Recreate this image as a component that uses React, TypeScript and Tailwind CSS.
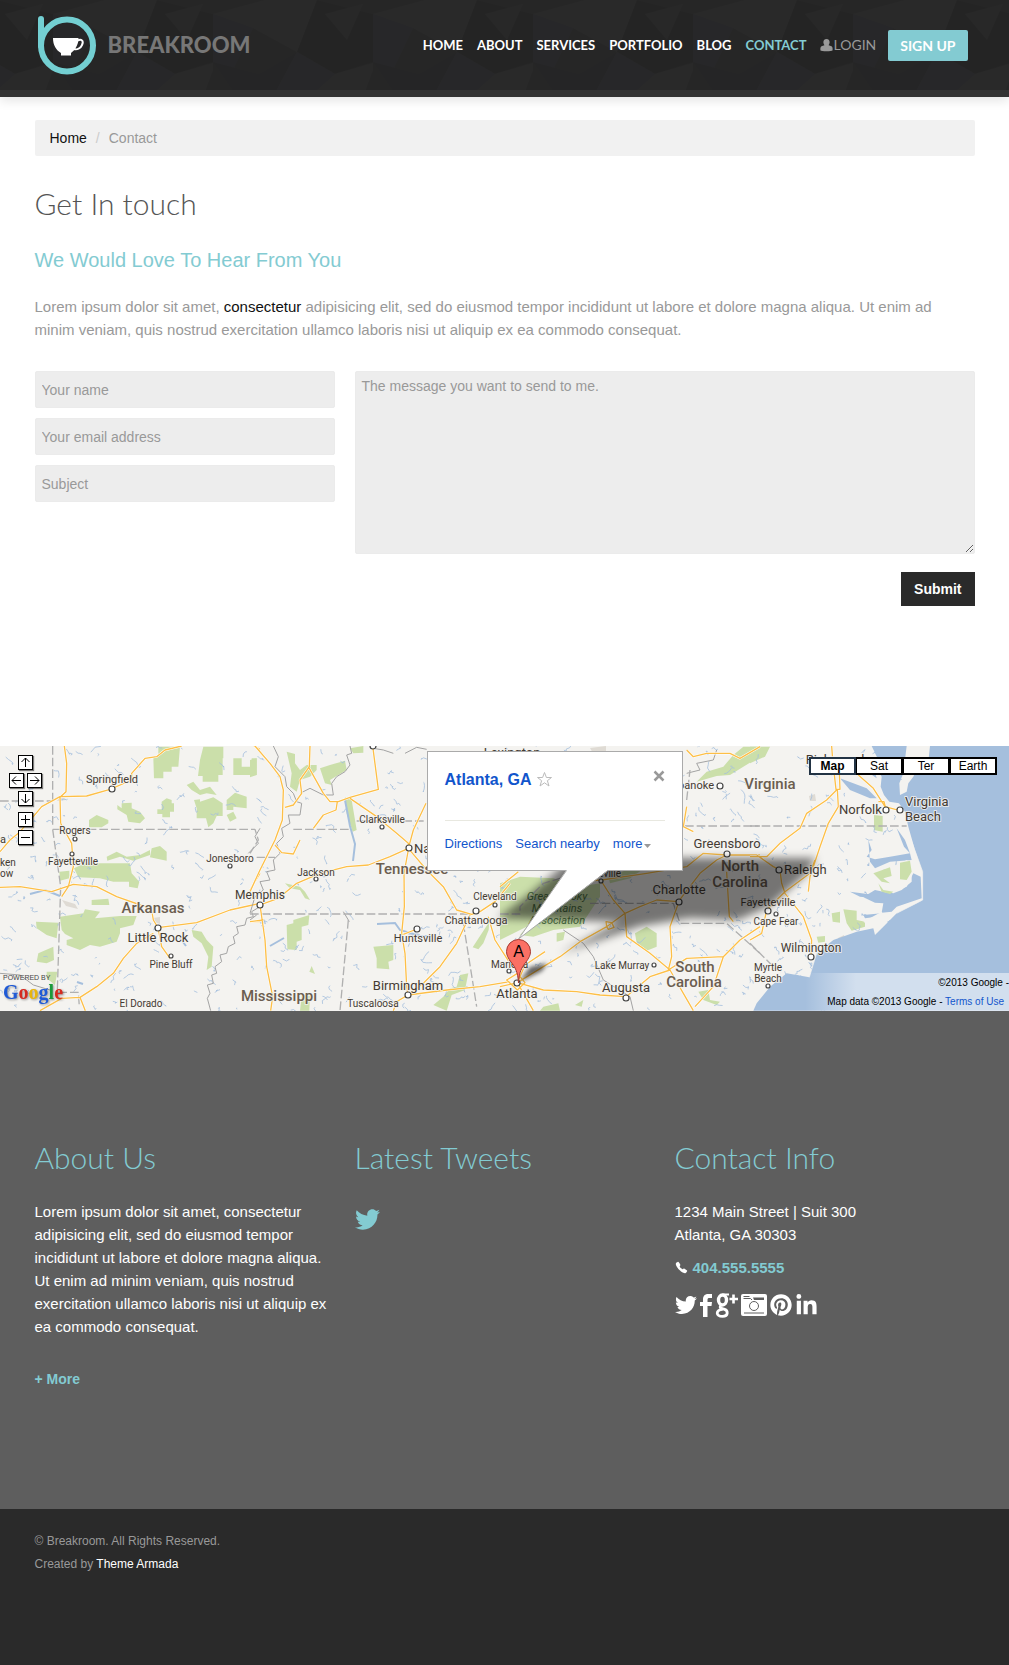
import React from 'react';
import { FaTwitter, FaPinterest, FaLinkedinIn } from 'react-icons/fa';
import { IoCall } from 'react-icons/io5';

const navItems = ['Home', 'About', 'Services', 'Portfolio', 'Blog', 'Contact'];

function HeaderTexture() {
  return (
    <svg className="absolute inset-0 h-full w-full" aria-hidden="true">
      <defs>
        <pattern id="facets" width="160" height="97" patternUnits="userSpaceOnUse" x="53">
          <rect width="160" height="97" fill="#262626" />
          <path d="M0 14L52 0H104L84 52L40 28Z" fill="#292929" />
          <path d="M104 0L84 52L122 74L160 62V14Z" fill="#242424" />
          <path d="M0 14L40 28L20 70L0 62Z" fill="#272729" />
          <path d="M122 74L163 62L150 97H96Z" fill="#292929" />
          <path d="M0 62L24 97H60L84 52L46 74Z" fill="#252526" />
          <path d="M84 52L122 74L96 97H60Z" fill="#272729" />
          <path d="M112 14L150 4L134 40Z" fill="#282828" />
        </pattern>
      </defs>
      <rect width="100%" height="100%" fill="url(#facets)" />
    </svg>
  );
}

function Logo() {
  return (
    <a href="#" className="flex items-center gap-3" aria-label="Breakroom home">
      <svg width="61" height="60" viewBox="0 0 61 60" fill="none" aria-hidden="true">
        <circle cx="32" cy="30.500" r="26" stroke="#73cfd2" strokeWidth="6" />
        <path d="M6 4V31" stroke="#73cfd2" strokeWidth="6" strokeLinecap="round" />
        <path d="M18 23H43.500C43.500 30 40 35 36 38V40.500H26V38C21 35 18 30 18 23Z" fill="#fff" />
        <path d="M42 26C46.500 23 49 26 47 30C45.500 33.500 42 35 39 34" stroke="#fff" strokeWidth="2" />
      </svg>
      <span className="font-[Lato] text-[22px] font-black leading-none text-[#777]">BREAKROOM</span>
    </a>
  );
}

function Header() {
  return (
    <header className="relative border-b-[7px] border-[#333] bg-[#262626] shadow-[0_4px_10px_rgba(0,0,0,0.1)]">
      <HeaderTexture />
      <div className="relative mx-auto flex h-[90px] w-full max-w-[940px] items-center justify-between">
        <Logo />
        <nav className="mr-[7px] flex items-center font-[Lato] text-sm font-bold uppercase">
          <ul className="flex items-center gap-3.5 text-[13px]">
            {navItems.map((item) => (
              <li key={item}>
                <a href="#" className={item === 'Contact' ? 'text-[#83cbd2]' : 'text-white'}>
                  {item}
                </a>
              </li>
            ))}
            <li>
              <a href="#" className="flex items-center text-sm font-normal text-[#999]">
                <svg width="13" height="13" viewBox="0 0 13 13" fill="currentColor" aria-hidden="true">
                  <path d="M6.500 0C8.700 0 9.800 1.600 9.600 3.600C9.500 4.900 9 5.600 8.600 6.200L11.500 7.300C12.700 7.800 12.800 10 12.500 11.500C12.300 12.600 .7 12.600 .5 11.500C.2 10 .3 7.800 1.500 7.300L4.400 6.200C4 5.600 3.500 4.900 3.400 3.600C3.200 1.600 4.300 0 6.500 0Z" />
                </svg>
                Login
              </a>
            </li>
          </ul>
          <a href="#" className="ml-3 rounded-xs bg-[#83cbd2] px-3 py-[5px] leading-[21px] text-white">
            Sign up
          </a>
        </nav>
      </div>
    </header>
  );
}

const fieldStyle =
  'w-full rounded-xs border border-[#ebebeb] bg-[#ededed] px-1.5 text-sm text-[#555] placeholder-[#999] outline-none';

function ContactForm() {
  return (
    <form className="mt-[30px]" onSubmit={(e) => e.preventDefault()}>
      <div className="grid grid-cols-[300px_1fr] gap-5">
        <div className="flex flex-col gap-2.5">
          {['Your name', 'Your email address', 'Subject'].map((label, i) => (
            <input
              key={label}
              type={i === 1 ? 'email' : 'text'}
              aria-label={label}
              placeholder={label}
              className={`${fieldStyle} block h-[37px]`}
            />
          ))}
        </div>
        <textarea
          aria-label="Message"
          placeholder="The message you want to send to me."
          className={`${fieldStyle} block h-[183px] resize rounded-sm py-1`}
        />
      </div>
      <div className="mt-[18px] flex justify-end">
        <button type="submit" className="h-[34px] bg-[#2a2a2a] px-[13px] text-sm font-bold text-white">
          Submit
        </button>
      </div>
    </form>
  );
}

/* Each sheet of the map is drawn at three units to the pixel. */
const sheets = [
  {
    place: 'translate(0 -6) scale(0.33333)',
    parks:
      'M460 55L475 45V20H540L535 80H515V95H490V115H462ZM610 20H670V55H668V105H655V125H608V108H594L600 60ZM700 55H725V80H755V55H770V105H700ZM485 185L500 175L515 180V190H522V215H510V232H487V222H472V208H485ZM582 180L600 178V185L640 172L668 190V228H650L640 250L625 262L618 235H590V205ZM680 180L705 158L740 170V205L700 200V210H680ZM352 195L365 205V190L395 188V205L420 215L435 235L420 250L385 245L380 225L352 208ZM267 240L290 225L325 240V250L305 262H267ZM222 385L255 370H390L395 400L418 425L413 445L387 440V425H340L300 415L235 412ZM455 325L480 318L500 335V362L450 352ZM178 395L208 392V415L180 422ZM275 480L325 476L328 495H275ZM180 530L250 520L255 508L300 515L285 535L360 528H410L400 555L360 565V580L350 605L300 620L270 615L240 630L200 615V600L220 595L195 582L185 570ZM108 545L175 548L170 595L140 585L110 565ZM115 640L160 620L162 660L140 670L110 665ZM140 695L172 695L165 735L140 715ZM575 570L605 575L620 600L640 620L635 680L620 690L625 650L605 610L580 590ZM680 225L700 215L710 235L690 245ZM320 350L350 335L380 350L420 345L450 330V345L400 362L360 350L322 362ZM560 135L580 125L600 150L630 140L650 165L620 160L600 165L575 150Z',
    roads:
      'M193 18L200 70L198 155L180 172L182 250M0 335L30 300L55 280L100 230L125 200L180 170L260 168L330 148L395 120V100L435 55L470 50L495 30L545 18M182 250L215 310L220 380L205 440L185 470M0 442L60 440L155 455L220 433L290 440L350 470L430 498L455 510L460 540L474 563L590 548L690 510L780 490M474 563L485 620L510 655M460 580L410 610L370 655L340 700L290 740L240 772L185 775L120 812M240 772L256 812M780 400L750 450M762 18L780 28M755 545L780 545',
    borders: 'M158 18V255M158 268H765L775 300L750 340M158 268L182 440L172 750M175 757H235L238 800M0 183H158',
    rivers: 'M780 500L755 515L760 530L740 535L735 555L710 560L715 580L700 590L705 610L685 620L680 640L660 645L665 665L645 680L650 700L635 705L640 730L622 735L630 760L622 775L632 812M0 700L60 705L100 735L150 750M780 265L765 290L775 310L745 340M750 540L770 525',
  },
  {
    place: 'translate(250 -6) scale(0.33333)',
    parks:
      'M110 35L135 42V70L150 90L170 75H200V90L180 110L150 120L140 155L120 140L125 100ZM210 85L240 75L285 62L290 90L240 120L245 135L225 130ZM0 60L20 55V105L0 112ZM300 25L340 18V38L310 40ZM110 555L130 550V540L178 525L175 555L155 560V600L140 605V630L112 628ZM370 620L430 615V660L415 665L418 688L380 685V655ZM718 545L716 570L700 610L685 628L668 622ZM105 430L150 440L165 455L180 480L165 475L150 450L120 445ZM185 678L178 695L195 702L190 690ZM630 705L655 700L645 750L605 765L590 812L550 795L580 770L600 745L620 740ZM155 765L180 768L178 812H150ZM285 172L305 180L320 270L308 275L290 220Z',
    roads:
      'M15 18L60 70L90 110L100 150L97 240L75 300L30 390L0 455M180 18L178 80L150 120L155 160L130 195L105 202M175 80L220 160L240 185L265 185L300 172L385 148L368 18M262 185L258 210L220 225L190 265M300 175L380 230L440 280L475 310V325L490 270L528 190M475 325L420 350L355 375L290 380L210 400L140 430L85 475L30 495M475 325L530 390L580 440L620 510L665 523L690 515L735 485L780 430M475 330L462 400L463 500L455 580L465 640L470 740L474 765M501 567L460 583M660 525L620 610L570 680L520 730L474 765L590 750L690 740L780 725M474 765L440 785L430 812M715 530L735 600L780 670M30 495L45 600L50 680L68 770L62 812M75 315L95 338L130 342L150 300M0 545L40 540',
    borders: 'M0 522H660M640 550L680 800M295 540L270 812M130 268H300M320 243H528M20 352H75',
    rivers: 'M70 18L85 50L75 80L105 110L110 140L130 160L140 185L155 190L150 225L115 225L120 250L95 265L100 290L80 310L90 340L70 360L75 390L50 395L60 420L30 425L40 450L15 470L0 520M300 18L305 40L290 45L300 75L285 95L260 110L245 130L250 165L220 165L180 145L150 160M280 515L298 545M430 40L400 30L370 25M465 40L500 22L530 28',
  },
  {
    place: 'translate(500 -6) scale(0.33333)',
    parks:
      'M730 20H780V50L730 80L690 105L650 108L590 125L620 95L670 80L700 45ZM0 430L60 410L160 415L240 440L300 430V470L240 560L160 570L100 590L60 585L80 560L0 600ZM405 580L440 560L470 580V620L440 632L410 610ZM170 580L195 575L190 600L170 605ZM595 755L625 750L630 780L660 785L650 795L610 780ZM130 800L175 790L180 812H120ZM325 410L380 390L420 370L440 380L390 415L330 430ZM225 795L250 780L245 800Z',
    roads:
      'M0 440L55 395M560 30L580 50L620 40L690 40L720 55L780 20M560 200L550 260L580 275M535 485L600 400L650 360L680 345L780 345M680 345L610 340L560 380L440 400L305 420L230 425M305 425L340 480L375 520L380 590L450 640L510 690L550 760L580 812M375 520L420 500L470 480L535 485M52 728L130 680L180 650L240 605L320 560L375 520M320 560L318 545L335 548L342 562L325 568ZM52 728L75 675L135 635M52 728L130 750L230 755L300 765L378 770L450 710L510 690M535 490L510 560L515 650L505 690L560 655L670 650L720 600L780 560M670 650L640 740L585 800M52 728L100 812M52 728L0 740M20 720L52 700L75 728L52 750ZM680 395L688 530L700 545',
    borders: 'M555 258H780M270 490H520L540 550H680L780 640M0 522H60V500L130 430L180 415M560 180L570 90',
    rivers: 'M190 570L250 610L280 650L310 720L390 770L400 812M560 100L600 90L590 70L640 60L650 30',
  },
  {
    place: 'translate(750 -6) scale(0.33333)',
    parks:
      'M0 20H60L45 50L0 70ZM372 225L398 228V275L372 270ZM280 508L320 512V540L345 545V560L305 572L290 550ZM245 520L270 515V548L248 545ZM200 590L225 588V605L205 608Z',
    roads:
      'M0 350L50 350L90 310L150 265L170 220L230 180L262 148L265 200L235 250L210 320L180 410L175 455M245 18L248 60L258 148L270 148L268 95M325 105L370 145L405 200L450 212M385 185H402L410 215M20 345L70 380L90 390L95 430L105 460L160 530L185 600L183 650M105 455L180 400L195 360M105 455L50 510L35 580L0 600',
    borders: 'M0 258H470M0 610L80 690',
    rivers: '',
  },
];

const ocean =
  'M365 18L385 60L380 85L395 110L392 140L402 165L418 185L447 190L465 215L475 260L495 330L518 395V480L500 490L440 520L400 560L375 585L370 565L320 575L250 600L200 640L178 712L110 700L60 740L20 790L10 812H1800V18H540L535 65L505 75L490 110L475 130L470 155L450 165L448 130L460 100L470 18Z';

const sounds =
  'M355 300L365 330L350 350L375 358L420 350L480 340L485 360L420 365L375 385L360 365ZM375 450L420 460L470 440L490 400L512 410L515 475L440 500L425 515L395 518L400 490L375 488L315 460L350 465ZM270 115L350 145L380 175H360L300 150ZM330 60L375 95L380 115L345 90ZM440 265L465 300L480 340L462 320ZM340 525L395 520L380 530L345 535ZM300 455L375 465V475L330 470Z';

const islands = 'M365 400L420 385L470 360L485 370L485 425L455 450L430 460L405 455L380 430L400 415L370 415ZM395 515L405 530L370 565L340 545Z';
const islandParks =
  'M450 368L480 362L485 395L470 420L450 418ZM370 400L420 382L425 408L400 415L420 430L395 425ZM385 430L400 450L430 455L420 462L395 455Z';

type Label = [string, number, number, number, ('start' | 'end')?];

const cities: Label[] = [
  ['Springfield', 112, 37, 11],
  ['Rogers', 75, 88, 10],
  ['Fayetteville', 73, 119, 10],
  ['Jonesboro', 230, 116, 10],
  ['Little Rock', 158, 196, 13],
  ['Pine Bluff', 171, 222, 10],
  ['El Dorado', 141, 261, 10],
  ['a', 0, 97, 11, 'start'],
  ['ken', 0, 120, 10, 'start'],
  ['ow', 0, 131, 10, 'start'],
  ['Memphis', 260, 153, 12],
  ['Clarksville', 382, 77, 10],
  ['Nashville', 414, 107, 13, 'start'],
  ['Jackson', 316, 130, 10],
  ['Cleveland', 495, 154, 10],
  ['Chattanooga', 476, 178, 11],
  ['Huntsville', 418, 196, 11],
  ['Birmingham', 408, 244, 13],
  ['Tuscaloosa', 373, 261, 10],
  ['Marietta', 491, 222, 10, 'start'],
  ['Atlanta', 517, 252, 13],
  ['Lexington', 512, 11, 13],
  ['Roanoke', 714, 43, 11, 'end'],
  ['Greensboro', 727, 102, 13],
  ['Charlotte', 679, 148, 13],
  ['Fayetteville', 768, 160, 11],
  ['Cape Fear', 776, 179, 10],
  ['Lake Murray', 622, 223, 10],
  ['Augusta', 626, 246, 13],
  ['Asheville', 621, 131, 10, 'end'],
  ['Richmond', 835, 18, 13],
  ['Norfolk', 839, 68, 13, 'start'],
  ['Virginia', 905, 60, 13, 'start'],
  ['Beach', 905, 75, 13, 'start'],
  ['Raleigh', 784, 128, 13, 'start'],
  ['Wilmington', 811, 206, 12],
  ['Myrtle', 768, 225, 10],
  ['Beach', 768, 236, 10],
];

const states: Label[] = [
  ['Arkansas', 153, 167, 15],
  ['Mississippi', 279, 255, 15],
  ['Tennessee', 412, 128, 15],
  ['Virginia', 770, 43, 15],
  ['North', 740, 125, 15],
  ['Carolina', 740, 141, 15],
  ['South', 695, 226, 15],
  ['Carolina', 694, 241, 15],
];

const dots = [
  [112, 43, 3], [75, 93, 2], [72, 108, 2], [230, 120, 2], [158, 182, 3], [171, 210, 2], [260, 159, 3],
  [382, 81, 2], [409, 102, 3], [316, 133, 2], [495, 159, 2], [476, 165, 3], [417, 183, 3], [408, 249, 3],
  [509, 225, 2], [517, 237, 3], [720, 40, 3], [727, 108, 3], [679, 156, 3], [768, 165, 3], [776, 168, 2],
  [654, 219, 2], [626, 252, 3], [601, 135, 2], [886, 64, 3], [900, 64, 3], [779, 124, 3], [811, 211, 3],
  [768, 240, 2], [373, 0, 3],
];

/* Small creeks scattered over the land with a fixed seed. */
function buildCreeks() {
  let seed = 7;
  const next = () => {
    seed = (seed * 16807) % 2147483647;
    return seed / 2147483647;
  };
  let d = '';
  for (let i = 0; i < 620; i += 1) {
    let x = next() * 900;
    let y = next() * 265;
    const dir = next() < 0.7 ? 1 : -1;
    d += `M${x.toFixed(1)} ${y.toFixed(1)}`;
    const steps = 2 + Math.floor(next() * 4);
    for (let s = 0; s < steps; s += 1) {
      x += (next() - 0.3) * 5;
      y += dir * (next() - 0.3) * 5;
      d += `L${x.toFixed(1)} ${y.toFixed(1)}`;
    }
  }
  return d;
}
const creeks = buildCreeks();

function MapLabels({ items, color, weight }: { items: Label[]; color: string; weight: number }) {
  return (
    <g
      fill={color}
      fontFamily="Roboto, sans-serif"
      fontWeight={weight}
      stroke="#f5f3f0"
      strokeWidth="2"
      strokeOpacity="0.8"
      strokeLinejoin="round"
      paintOrder="stroke"
    >
      {items.map(([text, x, y, size, anchor]) => (
        <text key={`${text}-${x}-${y}`} x={x} y={y} fontSize={size} textAnchor={anchor ?? 'middle'}>
          {text}
        </text>
      ))}
    </g>
  );
}

function MapCanvas() {
  return (
    <svg
      className="absolute inset-0 h-full w-full"
      viewBox="0 0 1009 265"
      preserveAspectRatio="xMidYMid slice"
      role="img"
      aria-label="Map centered on Atlanta, Georgia"
    >
      <defs>
        <filter id="soft" x="-20%" y="-40%" width="140%" height="180%">
          <feGaussianBlur stdDeviation="4" />
        </filter>
        <filter id="softer" x="-50%" y="-50%" width="200%" height="200%">
          <feGaussianBlur stdDeviation="2" />
        </filter>
      </defs>
      <rect width="1009" height="265" fill="#f4f3f0" />
      {sheets.map((s) => (
        <path key={s.place} transform={s.place} d={s.parks} fill="#cbdfaa" />
      ))}
      <path d="M62 154L75 158L78 163L66 160ZM153 172L160 171V178L154 176ZM57 55L60 50L66 54ZM590 2L606 0V8L594 9ZM809 50L815 48L816 55L810 55ZM838 192L844 189L846 197L838 198Z" fill="#dfdbd4" />
      <path d={creeks} fill="none" stroke="#a5bfdd" strokeWidth="0.8" />
      <path d="M345 54L350 80L355 98L353 115M377 178L395 177L400 184L420 190L432 190M30 148L45 144L60 150M270 200L284 192M77 236L83 238M180 192L186 200" fill="none" stroke="#a5bfdd" strokeWidth="2" />
      <g transform={sheets[3].place}>
        <path d={ocean} fill="#a5bfdd" />
        <path d={sounds} fill="#a5bfdd" />
        <path d={islands} fill="#f4f3f0" />
        <path d={islandParks} fill="#cbdfaa" />
        <path d="M465 250L518 395V480L440 520M178 712L200 640" fill="none" stroke="#f4f3f0" strokeWidth="2" />
      </g>
      {sheets.map((s) => (
        <g key={s.place} transform={s.place} fill="none" strokeLinejoin="round">
          <path d={s.rivers} stroke="#a3a3a3" strokeWidth="3" />
          <path d={s.borders} stroke="#b0b0b0" strokeWidth="4" strokeDasharray="26 9" />
          <path d={s.roads} stroke="#fff" strokeWidth="7" />
          <path d={s.roads} stroke="#fdbf47" strokeWidth="4" />
        </g>
      ))}
      <g fill="#fff" stroke="#444" strokeWidth="1.2">
        {dots.map(([x, y, r]) => (
          <circle key={`${x}-${y}`} cx={x} cy={y} r={r} />
        ))}
      </g>
      <MapLabels items={states} color="#6b5d4f" weight={500} />
      <MapLabels items={cities} color="#443b33" weight={400} />
      <g fill="#4b7044" fontFamily="Roboto, sans-serif" fontStyle="italic" fontSize="11" textAnchor="middle">
        <text x="557" y="154">Great Smoky</text>
        <text x="557" y="166">Mountains</text>
        <text x="557" y="178">Association</text>
      </g>
      <path
        d="M498 172L530 148L572 112H816L806 128L770 160L738 174L690 172L640 180L560 208L600 186L620 176Z"
        fill="#000"
        fillOpacity="0.52"
        filter="url(#soft)"
      />
      <path d="M519 236L530 221L547 217L542 225Z" fill="#000" fillOpacity="0.6" filter="url(#softer)" />
    </svg>
  );
}

const controlBox =
  'flex size-[15px] items-center justify-center border border-black bg-white text-black shadow-[1px_1px_1px_rgba(0,0,0,0.5)]';

function ControlIcon({ d }: { d: string }) {
  return (
    <svg width="11" height="11" viewBox="0 0 11 11" fill="none" stroke="currentColor" strokeWidth="1" aria-hidden="true">
      <path d={d} />
    </svg>
  );
}

function MapControls() {
  return (
    <div className="absolute left-[9px] top-[9px] flex w-[33px] flex-col items-center gap-[3px]">
      <button className={controlBox} aria-label="Pan up"><ControlIcon d="M5.500 1V10M1.500 5L5.500 1L9.500 5" /></button>
      <div className="flex gap-[3px]">
        <button className={controlBox} aria-label="Pan left"><ControlIcon d="M1 5.500H10M5 1.500L1 5.500L5 9.500" /></button>
        <button className={controlBox} aria-label="Pan right"><ControlIcon d="M1 5.500H10M6 1.500L10 5.500L6 9.500" /></button>
      </div>
      <button className={controlBox} aria-label="Pan down"><ControlIcon d="M5.500 1V10M1.500 6L5.500 10L9.500 6" /></button>
      <button className={`${controlBox} mt-[3px]`} aria-label="Zoom in"><ControlIcon d="M5.500 1V10M1 5.500H10" /></button>
      <button className={controlBox} aria-label="Zoom out"><ControlIcon d="M1 5.500H10" /></button>
    </div>
  );
}

function InfoWindow() {
  return (
    <>
      <section
        aria-label="Atlanta, GA"
        className="absolute left-1/2 top-[5px] -ml-[78px] h-[120px] w-[256px] border border-[#aaa] bg-white px-[17px] text-[#15c]"
      >
        <div className="flex h-[69px] items-start border-b border-[#e8e8e0] pt-[18px]">
          <h3 className="text-base font-bold leading-[20px]">Atlanta, GA</h3>
          <svg className="ml-1 mt-px" width="17" height="17" viewBox="0 0 17 17" fill="none" stroke="#bbb" aria-hidden="true">
            <path d="M8.500 1.500L10.400 6.500H15.500L11.400 9.700L13 15L8.500 11.800L4 15L5.600 9.700L1.500 6.500H6.600Z" />
          </svg>
          <button className="ml-auto" aria-label="Close">
            <svg width="12" height="12" viewBox="0 0 12 12" stroke="#999" strokeWidth="2.500" aria-hidden="true">
              <path d="M1.500 1.500L10.500 10.500M10.500 1.500L1.500 10.500" />
            </svg>
          </button>
        </div>
        <div className="mt-[14px] flex gap-[13px] text-[13px] leading-[18px]">
          <a href="#">Directions</a>
          <a href="#">Search nearby</a>
          <a href="#" className="flex items-center gap-0.5">
            more
            <svg className="mt-1" width="7" height="4" viewBox="0 0 7 4" fill="#999" aria-hidden="true">
              <path d="M0 0H7L3.500 4Z" />
            </svg>
          </a>
        </div>
      </section>
      <svg className="absolute left-1/2 top-[122px] -ml-1 h-[120px] w-[120px]" viewBox="0 0 120 120" aria-hidden="true">
        <path d="M65.500 0V2L17.500 71L107 2V0Z" fill="#fff" />
        <path d="M65.500 2.500L17.500 71L107 2.500" fill="none" stroke="#aaa" />
        <path
          d="M17.500 115C17 104 14 99 10 94C7 90 5.500 87 5.500 83.500A12 12 0 0 1 29.500 83.500C29.500 87 28 90 25 94C21 99 18 104 17.500 115Z"
          fill="#fb7064"
          stroke="#a33a33"
        />
        <text x="17.500" y="89" textAnchor="middle" fontFamily="Liberation Sans, sans-serif" fontSize="16" fill="#000">
          A
        </text>
      </svg>
    </>
  );
}

function MapSection() {
  return (
    <section className="relative mt-[140px] h-[265px] overflow-hidden">
      <MapCanvas />
      <InfoWindow />
      <MapControls />
      <div className="absolute right-3 top-[11px] flex bg-black text-xs text-black">
        {['Map', 'Sat', 'Ter', 'Earth'].map((label) => (
          <button
            key={label}
            className={
              label === 'Map'
                ? 'h-[18px] w-[47px] border-2 border-[#234] bg-white font-bold leading-[14px]'
                : 'h-[18px] w-[47px] border-2 border-l border-black bg-white leading-[14px]'
            }
          >
            {label}
          </button>
        ))}
      </div>
      <div className="absolute bottom-2 left-[3px]">
        <p className="text-[7px] leading-[7px] text-[#444]">POWERED BY</p>
        <p className="font-['Liberation_Serif'] text-[20px] font-bold leading-[22px] drop-shadow-[1px_1px_1px_rgba(0,0,0,0.4)]">
          <span className="text-[#1f5ad6]">G</span>
          <span className="text-[#d62a1f]">o</span>
          <span className="text-[#e8b50c]">o</span>
          <span className="text-[#1f5ad6]">g</span>
          <span className="text-[#1a9a3a]">l</span>
          <span className="text-[#d62a1f]">e</span>
        </p>
      </div>
      <div className="absolute bottom-0 right-0 flex h-[38px] w-[204px] flex-col items-end bg-linear-to-r from-white/0 to-white/50 to-25% text-[10px] leading-[19px] text-black">
        <p>©2013 Google -</p>
        <p className="pr-[5px]">
          Map data ©2013 Google -{' '}
          <a href="#" className="text-[#15c]">
            Terms of Use
          </a>
        </p>
      </div>
    </section>
  );
}

function FacebookIcon() {
  return (
    <svg width="12" height="23" viewBox="0 0 12 23" fill="#fff" aria-hidden="true">
      <path d="M3 23V12H0V8H3V5.500C3 1.800 5 0 8.500 0H12V4H9.500C8 4 7.500 4.600 7.500 6V8H12L11.500 12H7.500V23Z" />
    </svg>
  );
}

function GooglePlusIcon() {
  return (
    <svg width="23" height="25" viewBox="0 0 23 25" fill="none" stroke="#fff" aria-hidden="true">
      <ellipse cx="7.500" cy="7" rx="4" ry="5" strokeWidth="3.400" />
      <path d="M7.500 1.500H14" strokeWidth="2" />
      <path d="M6 12.500C4 14.500 6 15.500 9 16.200C13.500 17.500 13.500 23.300 7.500 23.300C.5 23.300 .5 17.200 7.500 16.400" strokeWidth="2.800" />
      <path d="M18.500 1.500V10.500M14.500 6H23" strokeWidth="2.600" />
    </svg>
  );
}

function CameraIcon() {
  return (
    <svg width="26" height="22" viewBox="0 0 26 22" fill="none" aria-hidden="true">
      <rect width="26" height="22" rx="2" fill="#fff" />
      <path d="M2.500 2.500H8.500M2.500 4.500H9.500L11 6M3 19H23" stroke="#5e5e5e" />
      <path d="M12 3.500H23V6H13Z" fill="#5e5e5e" />
      <circle cx="13" cy="12" r="4.500" stroke="#5e5e5e" />
    </svg>
  );
}

const footerHeading = 'font-[Lato] text-[30px] font-light leading-[40px] text-[#83cbd2]';

function Footer() {
  return (
    <footer>
      <div className="bg-[#5e5e5e] pb-[118px] pt-[126px] text-[15px] leading-[23px] text-white">
        <div className="mx-auto grid w-full max-w-[940px] grid-cols-3 gap-5">
          <section>
            <h2 className={footerHeading}>About Us</h2>
            <p className="mt-[23px]">
              Lorem ipsum dolor sit amet, consectetur adipisicing elit, sed do eiusmod tempor incididunt ut labore et
              dolore magna aliqua. Ut enim ad minim veniam, quis nostrud exercitation ullamco laboris nisi ut aliquip ex
              ea commodo consequat.
            </p>
            <p className="mt-[30px] text-sm leading-[23px]">
              <a href="#" className="font-bold text-[#83cbd2]">
                + More
              </a>
            </p>
          </section>
          <section>
            <h2 className={footerHeading}>Latest Tweets</h2>
            <a href="#" aria-label="Twitter feed" className="mt-[30px] inline-block text-[#83cbd2]">
              <FaTwitter size={25} />
            </a>
          </section>
          <section>
            <h2 className={footerHeading}>Contact Info</h2>
            <address className="mt-[23px] not-italic">
              1234 Main Street | Suit 300
              <br />
              Atlanta, GA 30303
            </address>
            <p className="mt-2.5 flex items-center gap-[5px]">
              <IoCall size={13} aria-hidden="true" />
              <a href="#" className="font-bold text-[#83cbd2]">
                404.555.5555
              </a>
            </p>
            <ul className="mt-[11px] flex h-[30px] items-center gap-[3px]">
              <li><a href="#" aria-label="Twitter"><FaTwitter size={22} /></a></li>
              <li><a href="#" aria-label="Facebook"><FacebookIcon /></a></li>
              <li><a href="#" aria-label="Google Plus"><GooglePlusIcon /></a></li>
              <li><a href="#" aria-label="Photos"><CameraIcon /></a></li>
              <li><a href="#" aria-label="Pinterest"><FaPinterest size={22} /></a></li>
              <li><a href="#" aria-label="LinkedIn"><FaLinkedinIn size={23} /></a></li>
            </ul>
          </section>
        </div>
      </div>
      <div className="bg-[#2a2a2a] pb-[89px] pt-[21px] text-xs leading-[23px] text-[#999]">
        <div className="mx-auto w-full max-w-[940px]">
          <p>© Breakroom. All Rights Reserved.</p>
          <p>
            Created by{' '}
            <a href="#" className="text-white">
              Theme Armada
            </a>
          </p>
        </div>
      </div>
    </footer>
  );
}

export default function App() {
  return (
    <div className="min-h-screen bg-white font-['Liberation_Sans',Arial,sans-serif]">
      <Header />
      <main>
        <div className="mx-auto w-full max-w-[940px] pt-[23px]">
          <nav aria-label="Breadcrumb" className="rounded-xs bg-[#f1f1f1] px-[15px] py-[9px] text-sm leading-[18px]">
            <ol className="flex gap-[9px]">
              <li><a href="#" className="text-[#111]">Home</a></li>
              <li className="text-[#ccc]" aria-hidden="true">/</li>
              <li className="text-[#999]">Contact</li>
            </ol>
          </nav>
          <h1 className="mt-[27px] font-[Lato] text-[30px] font-light leading-[40px] text-[#555]">Get In touch</h1>
          <h2 className="mt-6 text-[20px] leading-[26px] text-[#83cbd2]">We Would Love To Hear From You</h2>
          <p className="mt-[22px] text-[15px] leading-[23px] text-[#999]">
            Lorem ipsum dolor sit amet, <a href="#" className="text-[#111]">consectetur</a> adipisicing elit, sed do
            eiusmod tempor incididunt ut labore et dolore magna aliqua. Ut enim ad minim veniam, quis nostrud
            exercitation ullamco laboris nisi ut aliquip ex ea commodo consequat.
          </p>
          <ContactForm />
        </div>
        <MapSection />
      </main>
      <Footer />
    </div>
  );
}
